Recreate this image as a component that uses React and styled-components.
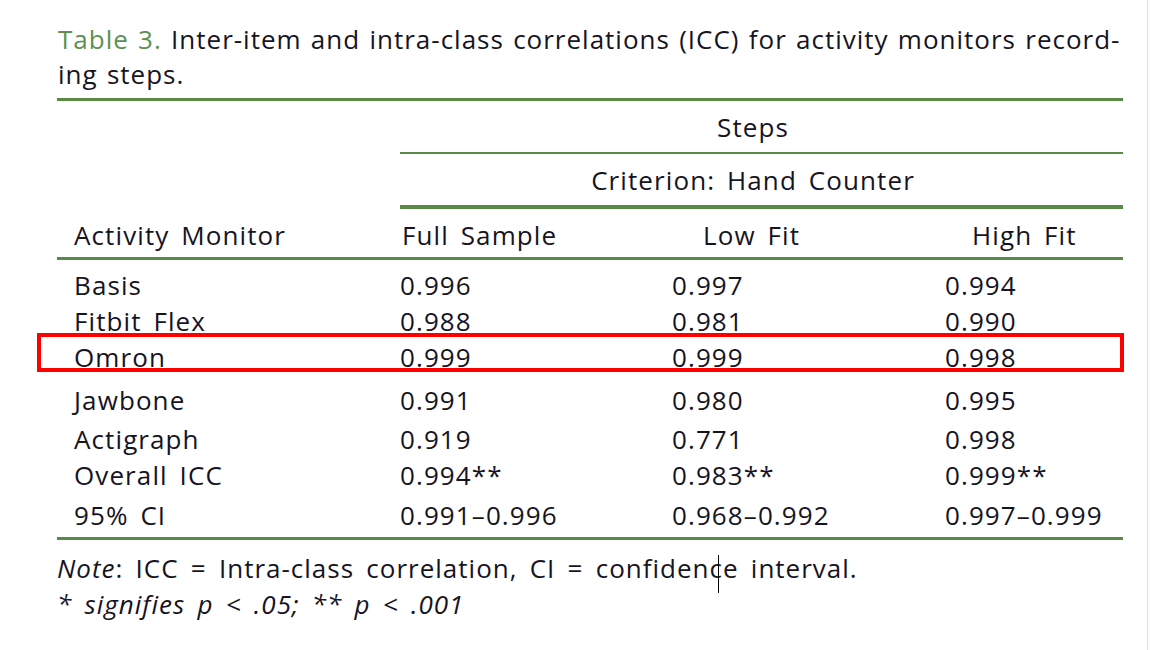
import React from "react";
import styled, { createGlobalStyle } from "styled-components";

const GlobalStyle = createGlobalStyle`
  html, body {
    margin: 0;
    padding: 0;
    background: #ffffff;
  }
  body {
    font-family: "Open Sans", Lato, "Liberation Sans", sans-serif;
    font-weight: 500;
    color: #16141f;
  }
`;

const Page = styled.div`
  position: relative;
  width: 1147px;
  height: 650px;
  border-right: 1px solid #d8e0ec;
  overflow: hidden;
`;

const Caption = styled.div`
  padding: 22px 0 0 58px;
  font-size: 26px;
  line-height: 35px;
  letter-spacing: 1px;
  word-spacing: 1.5px;
  white-space: nowrap;
`;

const Label = styled.span`
  color: #5b9150;
`;

const Table = styled.div`
  position: relative;
  margin: 6px 0 0 57px;
  width: 1066px;
  font-size: 26px;
  letter-spacing: 1.1px;
  word-spacing: 4px;
`;

const Rule = styled.div`
  height: ${(p) => p.$w || 3}px;
  margin-left: ${(p) => p.$indent || 0}px;
  background: #5a8a47;
`;

const Spanner = styled.div`
  margin-left: 343px;
  height: ${(p) => p.$h}px;
  padding-right: 17px;
  display: flex;
  align-items: center;
  justify-content: center;
`;

const Row = styled.div`
  display: grid;
  grid-template-columns: 343px 272px 273px 178px;
  height: ${(p) => p.$h || 36}px;
  margin-top: ${(p) => p.$gap || 0}px;
  align-items: center;
`;

const HeadRow = styled(Row)`
  height: 45px;
  padding-top: 3px;
`;

const Cell = styled.div`
  padding-left: ${(p) => p.$pad || 0}px;
  white-space: nowrap;
`;

const Body = styled.div`
  padding: 7px 0 4px;
`;

const Highlight = styled.div`
  position: absolute;
  left: -20px;
  top: 235px;
  width: 1087px;
  height: 39px;
  border: 4px solid #ff0000;
  box-sizing: border-box;
  pointer-events: none;
`;

const Notes = styled.div`
  padding: 10px 0 0 57px;
  font-size: 26px;
  line-height: 36px;
  letter-spacing: 1px;
  word-spacing: 4.5px;
  white-space: nowrap;
`;

const Caret = styled.span`
  position: relative;
  display: inline-block;
  width: 0;
  &::after {
    content: "";
    position: absolute;
    left: -5px;
    top: -23px;
    width: 1px;
    height: 38px;
    background: #000;
  }
`;

const rows = [
  { name: "Basis", v: ["0.996", "0.997", "0.994"], gap: 0 },
  { name: "Fitbit Flex", v: ["0.988", "0.981", "0.990"], gap: 0 },
  { name: "Omron", v: ["0.999", "0.999", "0.998"], gap: 0 },
  { name: "Jawbone", v: ["0.991", "0.980", "0.995"], gap: 7 },
  { name: "Actigraph", v: ["0.919", "0.771", "0.998"], gap: 3 },
  { name: "Overall ICC", v: ["0.994**", "0.983**", "0.999**"], gap: 0 },
  { name: "95% CI", v: ["0.991–0.996", "0.968–0.992", "0.997–0.999"], gap: 4 },
];

export default function App() {
  return (
    <Page>
      <GlobalStyle />
      <Caption>
        <Label>Table 3.</Label> Inter-item and intra-class correlations (ICC) for activity monitors record-
        <br />
        ing steps.
      </Caption>
      <Table>
        <Rule $w={3} />
        <Spanner $h={51}>Steps</Spanner>
        <Rule $w={2} $indent={343} />
        <Spanner $h={51}>Criterion: Hand Counter</Spanner>
        <Rule $w={4} $indent={343} />
        <HeadRow>
          <Cell $pad={17}>Activity Monitor</Cell>
          <Cell $pad={2}>Full Sample</Cell>
          <Cell $pad={31}>Low Fit</Cell>
          <Cell $pad={27}>High Fit</Cell>
        </HeadRow>
        <Rule $w={3} />
        <Body>
          {rows.map((r) => (
            <Row key={r.name} $gap={r.gap}>
              <Cell $pad={17}>{r.name}</Cell>
              {r.v.map((x, i) => (
                <Cell key={i}>{x}</Cell>
              ))}
            </Row>
          ))}
        </Body>
        <Rule $w={3} />
        <Highlight />
      </Table>
      <Notes>
        <div>
          <i>Note</i>: ICC = Intra-class correlation, CI = confidenc<Caret />e interval.
        </div>
        <div>
          <i>* signifies p &lt; .05; ** p &lt; .001</i>
        </div>
      </Notes>
    </Page>
  );
}
